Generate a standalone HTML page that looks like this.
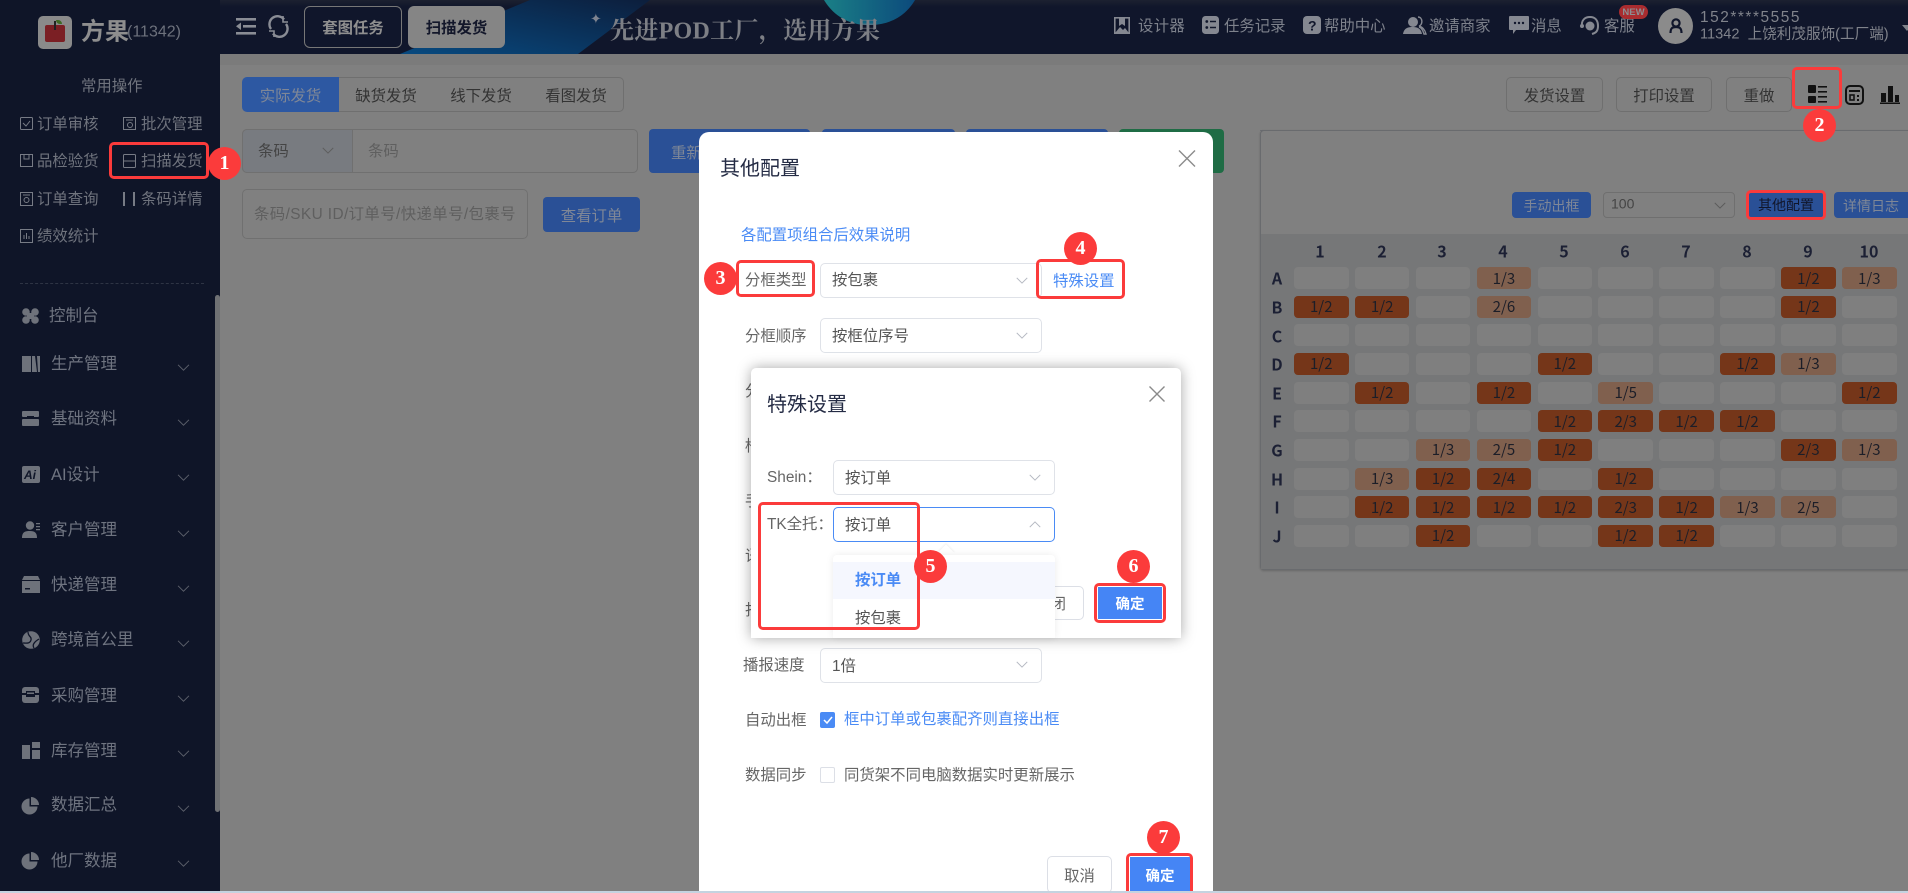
<!DOCTYPE html>
<html lang="zh"><head><meta charset="utf-8"><title>方果</title>
<style>
*{box-sizing:border-box}
html,body{margin:0;padding:0;width:1908px;height:893px;overflow:hidden;background:#808080;font-family:"Liberation Sans","Noto Sans CJK SC",sans-serif}
#page{position:relative;width:1908px;height:893px;overflow:hidden;background:#808080}
.a{position:absolute}
.t{position:absolute;white-space:nowrap;transform:translateY(calc(-50% + 1px));line-height:1.2}
.c{position:absolute;display:flex;align-items:center;justify-content:center;white-space:nowrap}
svg{position:absolute;display:block;overflow:visible}
#top{left:0;top:0;width:1908px;height:54px;background:#10162b;overflow:hidden}
#side{left:0;top:0;width:220px;height:893px;background:#0f1528}
.s{font-size:15.4px;color:#6f737d}
.m{font-size:16.5px;color:#6f7480;left:51px}
.hd{font-size:15.4px;color:#7e828c}
.btn{border:1px solid #6f6f6f;border-radius:5px;font-size:15.4px;color:#333;background:#808080;padding-top:1px}
.blue{background:#2a5096;border-radius:4px;color:#7f8797;font-size:15.4px;padding-top:1px}
.sel{position:absolute;left:820px;width:222px;height:35px;border:1px solid #dfe2e8;border-radius:5px;background:#fff}
.lb{font-size:15.4px;color:#666}
.v{font-size:15.4px;color:#555}
.red{position:absolute;border:3.5px solid #fb3b3b;border-radius:5px}
.bd{position:absolute;width:33px;height:33px;border-radius:50%;background:#fb3b3b;color:#fff;font:bold 20px/33px "Liberation Serif","Noto Serif CJK SC",serif;text-align:center;z-index:30}
#grid{position:absolute;left:1294px;top:267px;display:grid;grid-template-columns:repeat(10,54.5px);grid-auto-rows:22px;column-gap:6.4px;row-gap:6.67px}
#grid i{font-style:normal;background:#7f7f7f;border-radius:4px;display:flex;align-items:center;justify-content:center;font-size:15px;color:#1c1e28;font-family:"Noto Sans CJK SC",sans-serif}
#grid i.d{background:#753619}
#grid i.l{background:#80604e}
.hn{position:absolute;font:bold 16px "Noto Sans CJK SC",sans-serif;color:#1c2034;transform:translate(-50%,-50%);line-height:1.2}
</style></head>
<body>
<div id="page">
<svg width="0" height="0" style="position:absolute"><defs>
<symbol id="ch" viewBox="0 0 16 9"><path d="M1 1l7 7 7-7" fill="none" stroke="currentColor" stroke-width="1.2"/></symbol>
</defs></svg>

<!-- main page -->
<div class="a" style="left:220px;top:54px;width:1688px;height:839px;background:#808080"></div>
<div class="a" style="left:220px;top:54px;width:1688px;height:11px;background:#7b7b7b"></div>
<div class="a" style="left:1260px;top:130px;width:648px;height:1px;background:#6c6e72"></div>

<!-- tabs -->
<div class="c" style="left:242px;top:77px;width:97px;height:35px;background:#2d58a2;border-radius:5px 0 0 5px;color:#7f8797;font-size:15.4px;padding-top:1px">实际发货</div>
<div class="c btn" style="left:339px;top:77px;width:95px;height:35px;border-radius:0;border-left:0">缺货发货</div>
<div class="c btn" style="left:433px;top:77px;width:97px;height:35px;border-radius:0;border-left:0">线下发货</div>
<div class="c btn" style="left:529px;top:77px;width:95px;height:35px;border-radius:0 5px 5px 0;border-left:0">看图发货</div>

<!-- search rows -->
<div class="a" style="left:242px;top:129px;width:396px;height:44px;border:1px solid #707070;border-radius:5px;background:#808080"></div>
<div class="a" style="left:242px;top:129px;width:111px;height:44px;border:1px solid #707070;border-radius:5px 0 0 5px;background:#787b80"></div>
<div class="t" style="left:258px;top:151px;font-size:15.4px;color:#444">条码</div>
<svg style="left:322px;top:147px;color:#5d5d5d" width="12" height="7"><use href="#ch"/></svg>
<div class="t" style="left:368px;top:151px;font-size:15.4px;color:#5f5f5f">条码</div>
<div class="c blue" style="left:649px;top:129px;width:161px;height:44px;justify-content:flex-start;padding-left:22px">重新</div>
<div class="a" style="left:822px;top:129px;width:133px;height:44px;background:#2a5096;border-radius:4px"></div>
<div class="a" style="left:966px;top:129px;width:142px;height:44px;background:#2a5096;border-radius:4px"></div>
<div class="a" style="left:1119px;top:129px;width:105px;height:44px;background:#1f6c45;border-radius:4px"></div>
<div class="a" style="left:242px;top:189px;width:286px;height:50px;border:1px solid #707070;border-radius:5px"></div>
<div class="t" style="left:254px;top:214px;font-size:15.4px;letter-spacing:.4px;color:#5f5f5f">条码/SKU ID/订单号/快递单号/包裹号</div>
<div class="c blue" style="left:543px;top:197px;width:97px;height:35px">查看订单</div>

<!-- right top -->
<div class="c btn" style="left:1506px;top:77px;width:97px;height:35px">发货设置</div>
<div class="c btn" style="left:1616px;top:77px;width:96px;height:35px">打印设置</div>
<div class="c btn" style="left:1726px;top:77px;width:66px;height:35px">重做</div>
<svg style="left:1808px;top:85px" width="20" height="18" viewBox="0 0 20 18" fill="#111"><rect x="0" y="0" width="8" height="8" rx="1"/><rect x="0" y="11" width="8" height="7" rx="1"/><rect x="10" y="1" width="9" height="1.6"/><rect x="10" y="6" width="9" height="1.6"/><rect x="10" y="11" width="9" height="1.6"/><rect x="10" y="16" width="9" height="1.6"/></svg>
<svg style="left:1845px;top:85px" width="19" height="20" viewBox="0 0 19 20" fill="none" stroke="#111" stroke-width="2"><rect x="1" y="1" width="17" height="18" rx="4"/><path d="M4 6h11" /><rect x="5" y="10" width="4" height="5" stroke-width="1.6"/><path d="M12 11h2M12 15h2" /></svg>
<svg style="left:1880px;top:86px" width="20" height="18" viewBox="0 0 20 18" fill="#111"><rect x="1" y="7" width="5" height="9"/><rect x="8" y="0" width="5" height="16"/><rect x="15" y="9" width="4" height="7"/><rect x="0" y="16.5" width="20" height="1.5"/></svg>

<!-- right panel -->
<div class="a" style="left:1260px;top:130px;width:648px;height:440px;border:1px solid #696b6e;border-right:0;border-radius:4px 0 0 4px;background:#808080;box-shadow:0 1px 2px rgba(0,0,0,.2)"></div>
<div class="a" style="left:1261px;top:234px;width:647px;height:335px;background:#767778"></div>
<div class="c blue" style="left:1512px;top:192px;width:79px;height:26px;font-size:14px">手动出框</div>
<div class="a" style="left:1603px;top:192px;width:132px;height:26px;border:1px solid #6f6f6f;border-radius:4px"></div>
<div class="t" style="left:1611px;top:203px;font-size:14px;color:#444">100</div>
<svg style="left:1714px;top:202px;color:#5a5a5a" width="12" height="7"><use href="#ch"/></svg>
<div class="c" style="left:1748px;top:192px;width:76px;height:26px;background:#2a5096;color:#11162a;font-size:14px">其他配置</div>
<div class="c blue" style="left:1834px;top:192px;width:74px;height:26px;font-size:14px;border-radius:4px 0 0 4px">详情日志</div>

<div class="hn" style="left:1320px;top:251px">1</div><div class="hn" style="left:1382px;top:251px">2</div><div class="hn" style="left:1442px;top:251px">3</div><div class="hn" style="left:1503px;top:251px">4</div><div class="hn" style="left:1564px;top:251px">5</div><div class="hn" style="left:1625px;top:251px">6</div><div class="hn" style="left:1686px;top:251px">7</div><div class="hn" style="left:1747px;top:251px">8</div><div class="hn" style="left:1808px;top:251px">9</div><div class="hn" style="left:1869px;top:251px">10</div>
<div class="hn" style="left:1277px;top:278px">A</div><div class="hn" style="left:1277px;top:307px">B</div><div class="hn" style="left:1277px;top:336px">C</div><div class="hn" style="left:1277px;top:364px">D</div><div class="hn" style="left:1277px;top:393px">E</div><div class="hn" style="left:1277px;top:421px">F</div><div class="hn" style="left:1277px;top:450px">G</div><div class="hn" style="left:1277px;top:479px">H</div><div class="hn" style="left:1277px;top:507px">I</div><div class="hn" style="left:1277px;top:536px">J</div>

<div id="grid">
<i></i><i></i><i></i><i class="l">1/3</i><i></i><i></i><i></i><i></i><i class="d">1/2</i><i class="l">1/3</i>
<i class="d">1/2</i><i class="d">1/2</i><i></i><i class="l">2/6</i><i></i><i></i><i></i><i></i><i class="d">1/2</i><i></i>
<i></i><i></i><i></i><i></i><i></i><i></i><i></i><i></i><i></i><i></i>
<i class="d">1/2</i><i></i><i></i><i></i><i class="d">1/2</i><i></i><i></i><i class="d">1/2</i><i class="l">1/3</i><i></i>
<i></i><i class="d">1/2</i><i></i><i class="d">1/2</i><i></i><i class="l">1/5</i><i></i><i></i><i></i><i class="d">1/2</i>
<i></i><i></i><i></i><i></i><i class="d">1/2</i><i class="d">2/3</i><i class="d">1/2</i><i class="d">1/2</i><i></i><i></i>
<i></i><i></i><i class="l">1/3</i><i class="l">2/5</i><i class="d">1/2</i><i></i><i></i><i></i><i class="d">2/3</i><i class="l">1/3</i>
<i></i><i class="l">1/3</i><i class="d">1/2</i><i class="d">2/4</i><i></i><i class="d">1/2</i><i></i><i></i><i></i><i></i>
<i></i><i class="d">1/2</i><i class="d">1/2</i><i class="d">1/2</i><i class="d">1/2</i><i class="d">2/3</i><i class="d">1/2</i><i class="l">1/3</i><i class="l">2/5</i><i></i>
<i></i><i></i><i class="d">1/2</i><i></i><i></i><i class="d">1/2</i><i class="d">1/2</i><i></i><i></i><i></i>
</div>

<!-- top bar -->
<div id="top" class="a">
 <div class="a" style="left:0;top:0;width:1908px;height:7px;background:linear-gradient(#1c2130,#10162b)"></div>
 <svg style="left:0;top:0" width="1908" height="54"><defs><linearGradient id="g1" x1="0" y1="1" x2="1" y2="0"><stop offset="0" stop-color="#084a80"/><stop offset="1" stop-color="#0c1e3c"/></linearGradient><linearGradient id="g2" x1="0" y1="0" x2="1" y2="0"><stop offset="0" stop-color="#1a7f86"/><stop offset="1" stop-color="#0c4a7c"/></linearGradient></defs>
  <polygon points="530,0 650,0 578,54 400,54" fill="url(#g1)"/>
  <path d="M824 0C835 18 852 26 872 25C895 24 908 12 915 0Z" fill="url(#g2)"/>
 </svg>
 <svg style="left:236px;top:18px" width="20" height="17" viewBox="0 0 20 17" fill="#8a8d95"><rect x="0" y="0" width="20" height="2.6"/><rect x="7" y="7" width="13" height="2.6"/><rect x="0" y="14" width="20" height="2.6"/><path d="M5 4.5v7.5L0 8.3z"/></svg>
 <svg style="left:268px;top:16px" width="21" height="21" viewBox="0 0 21 21" fill="none" stroke="#8a8d95" stroke-width="2.4"><path d="M3 13A8 8 0 0 1 16 3.5"/><path d="M18 8a8 8 0 0 1-13 9.5"/><path d="M15 0v6h5M6 21v-6H1" stroke-width="1.6"/></svg>
 <div class="c" style="left:304px;top:6px;width:98px;height:42px;border:1px solid #777;border-radius:6px;background:#10162b;color:#8f8f8f;font-size:15.4px;font-weight:bold">套图任务</div>
 <div class="c" style="left:408px;top:6px;width:97px;height:42px;border-radius:6px;background:#858585;color:#13172a;font-size:15.4px;font-weight:bold">扫描发货</div>
 <div class="t" style="left:590px;top:18px;font-size:14px;color:#7f8490">✦</div>
 <div class="t" style="left:610px;top:27px;font:bold 24px 'Liberation Serif','Noto Serif CJK SC',serif;color:#7d7f85;letter-spacing:.3px">先进POD工厂，选用方果</div>

 <svg style="left:1114px;top:17px" width="16" height="17" viewBox="0 0 16 17" fill="none"><rect x=".8" y=".8" width="14.4" height="15.4" stroke="#858891" stroke-width="1.6"/><path d="M1 16l5-6 3 3 2-2 4 5z" fill="#858891"/><path d="M5 1h6v8l-3-2-3 2z" fill="#858891"/></svg>
 <div class="t hd" style="left:1138px;top:26px;letter-spacing:.3px">设计器</div>
 <svg style="left:1202px;top:16px" width="17" height="18" viewBox="0 0 17 18"><rect width="17" height="18" rx="3.5" fill="#858891"/><path d="M8 5.5h6M8 11.5h6" stroke="#10162b" stroke-width="1.5"/><circle cx="4.8" cy="5.5" r="1.4" fill="#10162b"/><circle cx="4.8" cy="11.5" r="1.4" fill="#10162b"/></svg>
 <div class="t hd" style="left:1224px;top:26px">任务记录</div>
 <svg style="left:1303px;top:16px" width="18" height="18" viewBox="0 0 18 18"><rect width="18" height="18" rx="4" fill="#858891"/></svg>
 <div class="t" style="left:1308px;top:25px;font-size:14px;font-weight:bold;color:#10162b">?</div>
 <div class="t hd" style="left:1324px;top:26px">帮助中心</div>
 <svg style="left:1403px;top:16px" width="24" height="19" viewBox="0 0 24 19" fill="#858891"><circle cx="10" cy="6" r="5"/><path d="M0 18c1-6 5-7 10-7s8 2 9 7z"/><path d="M15 1c5 0 5 8 1 9 4 1 6 4 7 8h-2c-1-3-2-6-5-7" fill="none" stroke="#858891" stroke-width="1.4"/></svg>
 <div class="t hd" style="left:1429px;top:26px">邀请商家</div>
 <svg style="left:1509px;top:16px" width="20" height="19" viewBox="0 0 20 19"><path d="M1 0h18a1 1 0 0 1 1 1v12a1 1 0 0 1-1 1H7l-3 4v-4H1a1 1 0 0 1-1-1V1a1 1 0 0 1 1-1z" fill="#858891"/><circle cx="6" cy="7" r="1.2" fill="#10162b"/><circle cx="10" cy="7" r="1.2" fill="#10162b"/><circle cx="14" cy="7" r="1.2" fill="#10162b"/></svg>
 <div class="t hd" style="left:1531px;top:26px">消息</div>
 <svg style="left:1580px;top:16px" width="20" height="19" viewBox="0 0 20 19" fill="none" stroke="#858891" stroke-width="2"><path d="M2 11C1 4 5 1 10 1s8 3 8 9-3 7-6 8"/><circle cx="10" cy="10" r="4.5" fill="#858891" stroke="none"/><circle cx="2" cy="10" r="2" fill="#858891" stroke="none"/></svg>
 <div class="t hd" style="left:1604px;top:26px">客服</div>
 <div class="c" style="left:1619px;top:5px;width:29px;height:14px;border-radius:7px;background:#a92c2f;color:#8d8e92;font-size:9.5px;font-weight:bold">NEW</div>
 <div class="a" style="left:1658px;top:8px;width:35px;height:36px;border-radius:50%;background:#8b8b8b"></div>
 <svg style="left:1669px;top:18px" width="14" height="16" viewBox="0 0 14 16" fill="none" stroke="#10162b" stroke-width="2.2"><circle cx="7" cy="5" r="3.6"/><path d="M1.500 15c0-5 2-6 5.500-6s5.500 1 5.500 6"/></svg>
 <div class="t" style="left:1700px;top:17px;font-size:15.4px;color:#80838b;letter-spacing:1.55px">152****5555</div>
 <div class="t" style="left:1700px;top:34px;font-size:14.6px;color:#80838b">11342&nbsp; 上饶利茂服饰(工厂端)</div>
 <div class="a" style="left:1902px;top:25px;width:0;height:0;border:5px solid transparent;border-top:6px solid #7f828a"></div>
</div>

<!-- sidebar -->
<div id="side" class="a">
 <div class="a" style="left:38px;top:16px;width:34px;height:33px;border-radius:5px;background:#8a8a8a"></div>
 <div class="a" style="left:45px;top:29px;width:20px;height:13px;border-radius:2px;background:#7b1f24"></div>
 <div class="a" style="left:45px;top:25px;width:20px;height:8px;border-radius:2px;background:#7b1f24"></div>
 <div class="a" style="left:54px;top:21px;width:2px;height:9px;background:#222"></div>
 <div class="a" style="left:56px;top:20px;width:6px;height:4px;background:#3e6a24;border-radius:0 4px 0 4px"></div>
 <div class="t" style="left:81px;top:32px;font-size:24px;font-weight:bold;color:#8e8e8e">方果</div>
 <div class="t" style="left:127px;top:31px;font-size:16px;color:#6d717c">(11342)</div>
 <div class="t s" style="left:81px;top:86px">常用操作</div>

 <svg style="left:20px;top:117px" width="13" height="13" viewBox="0 0 13 13" fill="none" stroke="#777b85"><rect x=".5" y=".5" width="12" height="12" rx="1"/><path d="M3 6l3 3 4-5"/></svg>
 <div class="t s" style="left:37px;top:124px">订单审核</div>
 <svg style="left:123px;top:117px" width="13" height="13" viewBox="0 0 13 13" fill="none" stroke="#777b85"><rect x=".5" y=".5" width="12" height="12"/><path d="M3 3h7"/><circle cx="7" cy="8" r="2.500"/></svg>
 <div class="t s" style="left:141px;top:124px">批次管理</div>
 <svg style="left:20px;top:154px" width="13" height="13" viewBox="0 0 13 13" fill="none" stroke="#777b85"><rect x=".5" y=".5" width="12" height="12"/><path d="M4 1v4h5V1"/></svg>
 <div class="t s" style="left:37px;top:161px">品检验货</div>
 <svg style="left:123px;top:154px" width="13" height="14" viewBox="0 0 13 14" fill="none" stroke="#777b85"><rect x=".5" y=".5" width="12" height="13" rx="1"/><path d="M0 7h13"/></svg>
 <div class="t s" style="left:141px;top:161px">扫描发货</div>
 <svg style="left:20px;top:192px" width="13" height="14" viewBox="0 0 13 14" fill="none" stroke="#777b85"><rect x=".5" y=".5" width="12" height="13"/><path d="M3 3h7"/><circle cx="6.500" cy="8" r="2.500"/></svg>
 <div class="t s" style="left:37px;top:199px">订单查询</div>
 <div class="a" style="left:123px;top:192px;width:2px;height:14px;background:#777b85"></div>
 <div class="a" style="left:133px;top:192px;width:2px;height:14px;background:#777b85"></div>
 <div class="t s" style="left:141px;top:199px">条码详情</div>
 <svg style="left:20px;top:229px" width="13" height="14" viewBox="0 0 13 14" fill="none" stroke="#777b85"><rect x=".5" y=".5" width="12" height="13"/><path d="M4 10V6M6.500 10V4M9 10V7"/></svg>
 <div class="t s" style="left:37px;top:236px">绩效统计</div>
 <div class="a" style="left:20px;top:283px;width:184px;border-top:1px dashed #2e3444"></div>

 <svg style="left:22px;top:308px" width="17" height="16" viewBox="0 0 17 16" fill="#6e727b"><circle cx="4" cy="4" r="3.800"/><circle cx="13" cy="4" r="3.800"/><circle cx="4" cy="12" r="3.800"/><circle cx="13" cy="12" r="3.800"/><rect x="5" y="5" width="7" height="6"/></svg>
 <div class="t m" style="left:49px;top:316px">控制台</div>
 <svg style="left:22px;top:356px" width="18" height="16" viewBox="0 0 18 16" fill="#6e727b"><rect y="0" width="9" height="16"/><path d="M10 0l3 0 2 16h-5zM15 0h3v16h-2z"/></svg>
 <div class="t m" style="top:364px">生产管理</div>
 <svg style="left:22px;top:411px" width="17" height="15" viewBox="0 0 17 15" fill="#6e727b"><rect width="17" height="6" rx="1"/><rect y="8" width="17" height="7" rx="1"/><path d="M5 5h7v3H5z" fill="#0f1528"/></svg>
 <div class="t m" style="top:419px">基础资料</div>
 <svg style="left:22px;top:466px" width="18" height="17" viewBox="0 0 18 17"><rect width="18" height="17" rx="2" fill="#6e727b"/></svg>
 <div class="t" style="left:24px;top:474px;font-size:12px;font-weight:bold;font-style:italic;color:#0f1528">Ai</div>
 <div class="t m" style="top:475px">AI设计</div>
 <svg style="left:22px;top:521px" width="18" height="17" viewBox="0 0 18 17" fill="#6e727b"><circle cx="8" cy="4.500" r="4.200"/><path d="M0 17c0-6 3-7 8-7s7 2 7 7z"/><path d="M14 2h4v1.300h-4zM14 5h4v1.300h-4zM14 8h4v1.300h-4z"/></svg>
 <div class="t m" style="top:530px">客户管理</div>
 <svg style="left:22px;top:576px" width="18" height="17" viewBox="0 0 18 17" fill="#6e727b"><path d="M2 0h14l2 4H0z"/><rect y="5" width="18" height="12"/><rect x="3" y="12" width="5" height="1.500" fill="#0f1528"/></svg>
 <div class="t m" style="top:585px">快递管理</div>
 <svg style="left:22px;top:631px" width="18" height="18" viewBox="0 0 18 18"><circle cx="9" cy="9" r="8.800" fill="#6e727b"/><path d="M6 1c0 5 4 4 3 8s-5 3-8 3M12 17c-2-3 0-6 5-9" stroke="#0f1528" stroke-width="1.300" fill="none"/></svg>
 <div class="t m" style="top:640px">跨境首公里</div>
 <svg style="left:22px;top:687px" width="17" height="16" viewBox="0 0 17 16" fill="#6e727b"><path d="M3 0h11a3 3 0 0 1 3 3v3H0V3a3 3 0 0 1 3-3z"/><path d="M0 8h17v5a3 3 0 0 1-3 3H3a3 3 0 0 1-3-3z"/><rect x="4" y="4" width="9" height="6" fill="#0f1528"/><rect x="5" y="5.500" width="7" height="1.500" fill="#6e727b"/></svg>
 <div class="t m" style="top:696px">采购管理</div>
 <svg style="left:22px;top:742px" width="18" height="17" viewBox="0 0 18 17" fill="#6e727b"><rect y="3" width="8" height="14"/><rect x="10" y="0" width="8" height="6"/><rect x="10" y="8" width="8" height="9"/></svg>
 <div class="t m" style="top:751px">库存管理</div>
 <svg style="left:22px;top:797px" width="17" height="17" viewBox="0 0 17 17" fill="#6e727b"><path d="M7.500 1.500v8h8A8 8 0 1 1 7.500 1.500z"/><path d="M9 0a8 8 0 0 1 8 8H9z"/></svg>
 <div class="t m" style="top:805px">数据汇总</div>
 <svg style="left:22px;top:852px" width="17" height="17" viewBox="0 0 17 17" fill="#6e727b"><path d="M7.500 1.500v8h8A8 8 0 1 1 7.500 1.500z"/><path d="M9 0a8 8 0 0 1 8 8H9z"/></svg>
 <div class="t m" style="top:861px">他厂数据</div>

 <svg style="left:177px;top:364px;color:#5d616c" width="13" height="7"><use href="#ch"/></svg>
 <svg style="left:177px;top:419px;color:#5d616c" width="13" height="7"><use href="#ch"/></svg>
 <svg style="left:177px;top:474px;color:#5d616c" width="13" height="7"><use href="#ch"/></svg>
 <svg style="left:177px;top:530px;color:#5d616c" width="13" height="7"><use href="#ch"/></svg>
 <svg style="left:177px;top:585px;color:#5d616c" width="13" height="7"><use href="#ch"/></svg>
 <svg style="left:177px;top:640px;color:#5d616c" width="13" height="7"><use href="#ch"/></svg>
 <svg style="left:177px;top:695px;color:#5d616c" width="13" height="7"><use href="#ch"/></svg>
 <svg style="left:177px;top:750px;color:#5d616c" width="13" height="7"><use href="#ch"/></svg>
 <svg style="left:177px;top:805px;color:#5d616c" width="13" height="7"><use href="#ch"/></svg>
 <svg style="left:177px;top:860px;color:#5d616c" width="13" height="7"><use href="#ch"/></svg>
 <div class="a" style="left:215px;top:295px;width:5px;height:517px;border-radius:3px;background:#6f7174"></div>
</div>

<div class="red" style="left:109px;top:142px;width:100px;height:37px"></div>
<div class="bd" style="left:208px;top:147px">1</div>
<div class="red" style="left:1792px;top:67px;width:50px;height:42px"></div>
<div class="bd" style="left:1803px;top:109px">2</div>
<div class="red" style="left:1746px;top:190px;width:80px;height:30px"></div>

<!-- modal -->
<div class="a" style="left:699px;top:132px;width:514px;height:761px;background:#fff;border-radius:10px 10px 0 0"></div>
<div class="t" style="left:720px;top:168px;font-size:20px;color:#252c45">其他配置</div>
<svg style="left:1178px;top:150px" width="18" height="17" viewBox="0 0 18 17" fill="none" stroke="#8a8a8a" stroke-width="1.400"><path d="M1 .5l16 16M17 .5l-16 16"/></svg>
<div class="t" style="left:741px;top:235px;font-size:15.4px;color:#4a8bf5">各配置项组合后效果说明</div>

<div class="t lb" style="left:745px;top:280px">分框类型</div>
<div class="sel" style="top:263px"></div>
<div class="t v" style="left:832px;top:280px">按包裹</div>
<svg style="left:1016px;top:277px;color:#b5b9c2" width="12" height="7"><use href="#ch"/></svg>
<div class="t" style="left:1053px;top:281px;font-size:15.4px;color:#4a8bf5">特殊设置</div>
<div class="red" style="left:736px;top:260px;width:79px;height:37px"></div>
<div class="red" style="left:1036px;top:259px;width:89px;height:40px"></div>
<div class="bd" style="left:704px;top:262px">3</div>
<div class="bd" style="left:1064px;top:232px">4</div>

<div class="t lb" style="left:745px;top:336px">分框顺序</div>
<div class="sel" style="top:318px"></div>
<div class="t v" style="left:832px;top:336px">按框位序号</div>
<svg style="left:1016px;top:332px;color:#b5b9c2" width="12" height="7"><use href="#ch"/></svg>
<div class="t lb" style="left:745px;top:391px">分</div>
<div class="t lb" style="left:745px;top:446px">框</div>
<div class="t lb" style="left:745px;top:501px">手</div>
<div class="t lb" style="left:745px;top:556px">语</div>
<div class="t lb" style="left:745px;top:610px">扫</div>

<div class="t lb" style="left:743px;top:665px">播报速度</div>
<div class="sel" style="top:648px"></div>
<div class="t v" style="left:832px;top:666px">1倍</div>
<svg style="left:1016px;top:661px;color:#b5b9c2" width="12" height="7"><use href="#ch"/></svg>
<div class="t lb" style="left:745px;top:720px">自动出框</div>
<div class="a" style="left:820px;top:712px;width:15px;height:16px;background:#4a8bf5;border-radius:2px"></div>
<svg style="left:823px;top:716px" width="10" height="8" viewBox="0 0 10 8" fill="none" stroke="#fff" stroke-width="1.500"><path d="M1 4l3 3 5-6"/></svg>
<div class="t" style="left:844px;top:719px;font-size:15.4px;color:#4a8bf5">框中订单或包裹配齐则直接出框</div>
<div class="t lb" style="left:745px;top:775px">数据同步</div>
<div class="a" style="left:820px;top:767px;width:15px;height:16px;border:1px solid #dcdfe6;border-radius:2px;background:#fff"></div>
<div class="t" style="left:844px;top:775px;font-size:15.4px;color:#666">同货架不同电脑数据实时更新展示</div>
<div class="c" style="left:1047px;top:856px;width:65px;height:37px;border:1px solid #dcdfe6;border-radius:5px;background:#fff;color:#666;font-size:15.4px">取消</div>
<div class="c" style="left:1130px;top:857px;width:60px;height:36px;background:#4585f5;color:#fff;font-size:14.5px;font-weight:bold">确定</div>
<div class="red" style="left:1126px;top:853px;width:67px;height:43px"></div>
<div class="bd" style="left:1147px;top:821px">7</div>

<!-- inner modal -->
<div class="a" style="left:751px;top:368px;width:430px;height:270px;background:#fff;border-radius:5px 5px 0 0;box-shadow:0 0 14px rgba(0,0,0,.35)"></div>
<div class="t" style="left:767px;top:404px;font-size:20px;color:#252c45">特殊设置</div>
<svg style="left:1149px;top:386px" width="16" height="16" viewBox="0 0 16 16" fill="none" stroke="#8a8a8a" stroke-width="1.400"><path d="M.5.5l15 15M15.500.5l-15 15"/></svg>
<div class="t lb" style="left:767px;top:477px">Shein：</div>
<div class="sel" style="left:833px;top:460px"></div>
<div class="t v" style="left:845px;top:478px">按订单</div>
<svg style="left:1029px;top:474px;color:#b5b9c2" width="12" height="7"><use href="#ch"/></svg>
<div class="t lb" style="left:767px;top:524px">TK全托：</div>
<div class="sel" style="left:833px;top:507px;border-color:#4a8bf5"></div>
<div class="t v" style="left:845px;top:525px">按订单</div>
<svg style="left:1029px;top:521px;color:#b5b9c2;transform:scaleY(-1)" width="12" height="7"><use href="#ch"/></svg>
<div class="c" style="left:1020px;top:586px;width:64px;height:34px;border:1px solid #dcdfe6;border-radius:5px;background:#fff;color:#666;font-size:15.4px;justify-content:flex-end;padding-right:17px">关闭</div>
<div class="a" style="left:940px;top:547px;width:12px;height:12px;background:#fff;transform:rotate(45deg);box-shadow:-1px -1px 2px rgba(0,0,0,.06)"></div>
<div class="a" style="left:833px;top:555px;width:222px;height:83px;background:#fff;border-radius:4px 4px 0 0;box-shadow:0 0 8px rgba(0,0,0,.08)"></div>
<div class="a" style="left:833px;top:562px;width:222px;height:37px;background:#f5f7fe"></div>
<div class="t" style="left:855px;top:580px;font-size:15.4px;font-weight:bold;color:#4a8bf5">按订单</div>
<div class="t v" style="left:855px;top:618px">按包裹</div>
<div class="c" style="left:1098px;top:587px;width:64px;height:32px;background:#4585f5;color:#fff;font-size:14.5px;font-weight:bold">确定</div>
<div class="red" style="left:1094px;top:583px;width:72px;height:40px"></div>
<div class="red" style="left:758px;top:502px;width:162px;height:128px"></div>
<div class="bd" style="left:914px;top:550px">5</div>
<div class="bd" style="left:1117px;top:550px">6</div>

<div class="a" style="left:0;top:891px;width:1908px;height:2px;background:#c4d3e0;z-index:40"></div>
</div>
</body></html>
